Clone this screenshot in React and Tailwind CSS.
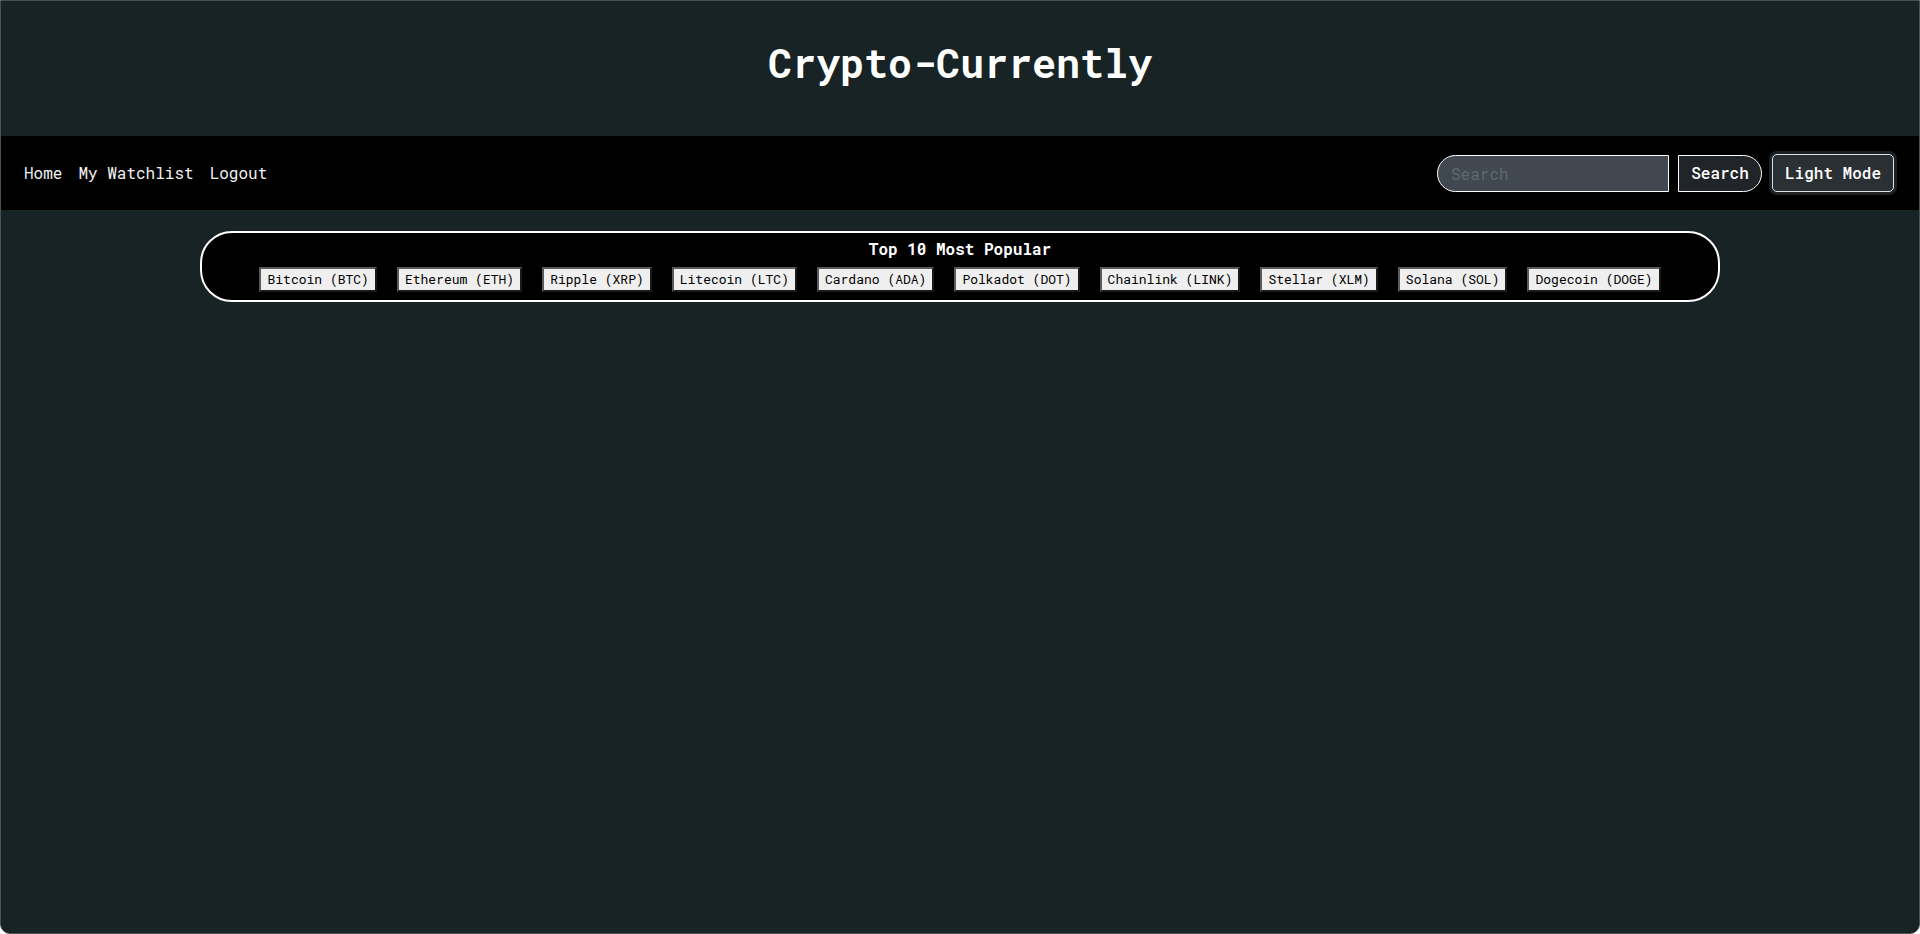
import { useState } from 'react';

const coins = [
  'Bitcoin (BTC)',
  'Ethereum (ETH)',
  'Ripple (XRP)',
  'Litecoin (LTC)',
  'Cardano (ADA)',
  'Polkadot (DOT)',
  'Chainlink (LINK)',
  'Stellar (XLM)',
  'Solana (SOL)',
  'Dogecoin (DOGE)'
];

export default function App() {
  const [query, setQuery] = useState('');

  return (
    <div className="h-screen overflow-hidden rounded-b-[10px] border border-[#465353] bg-[#172324] font-['Roboto_Mono','DejaVu_Sans_Mono',monospace] text-white">
      <header className="flex h-[135px] items-center justify-center pb-[11px]">
        <h1 className="text-[40px] font-bold leading-[48px]">Crypto-Currently</h1>
      </header>

      <nav className="flex h-[74px] items-center justify-between bg-black pl-[23px] pr-[25px]">
        <div className="flex gap-4 text-base text-[#f1f1f1]">
          <a href="#">Home</a>
          <a href="#">My Watchlist</a>
          <a href="#">Logout</a>
        </div>
        <div className="flex items-center">
          <input
            value={query}
            onChange={(e) => setQuery(e.target.value)}
            placeholder="Search"
            className="h-[37px] w-[232px] rounded-l-[19px] border border-white bg-[#41484f] px-[13px] text-base text-white outline-none placeholder:text-[#5f6870]"
          />
          <button type="button" className="ml-[9px] h-[37px] w-[84px] rounded-r-[19px] border border-white bg-[#212529] text-base font-medium text-white">
            Search
          </button>
          <button type="button" className="ml-[10px] h-[38px] w-[122px] rounded-[5px] border border-[#dee2e6] bg-[#2b3035] text-base font-medium text-white shadow-[0_0_0_3px_#1d2124]">
            Light Mode
          </button>
        </div>
      </nav>

      <section className="mx-auto mt-[21px] w-[1520px] rounded-[32px] border-2 border-white bg-black pb-[8px] pt-[6px]">
        <h2 className="text-center text-base font-bold leading-[19px]">Top 10 Most Popular</h2>
        <div className="mt-[9px] flex justify-center gap-[20px]">
          {coins.map((coin) => (
            <button
              key={coin}
              type="button"
              className="h-[25px] border-2 border-t-[#5a5a5a] border-l-[#5a5a5a] border-r-[#1a1a1a] border-b-[#1a1a1a] bg-[#efefef] px-[6px] text-[13px] leading-[17px] text-black"
            >
              {coin}
            </button>
          ))}
        </div>
      </section>
    </div>
  );
}
